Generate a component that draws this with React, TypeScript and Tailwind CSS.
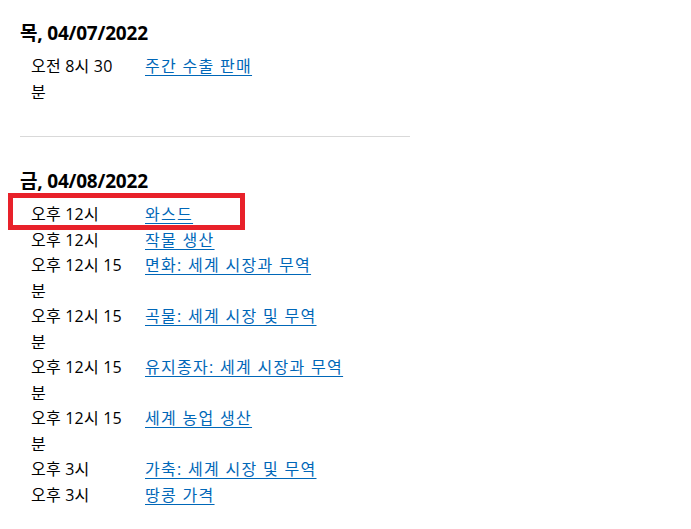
import React from 'react';

interface EventRow {
  time: string;
  title: string;
}

interface DaySection {
  date: string;
  rows: EventRow[];
}

const days: DaySection[] = [
  {
    date: '목, 04/07/2022',
    rows: [{ time: '오전 8시 30 분', title: '주간 수출 판매' }],
  },
  {
    date: '금, 04/08/2022',
    rows: [
      { time: '오후 12시', title: '와스드' },
      { time: '오후 12시', title: '작물 생산' },
      { time: '오후 12시 15 분', title: '면화: 세계 시장과 무역' },
      { time: '오후 12시 15 분', title: '곡물: 세계 시장 및 무역' },
      { time: '오후 12시 15 분', title: '유지종자: 세계 시장과 무역' },
      { time: '오후 12시 15 분', title: '세계 농업 생산' },
      { time: '오후 3시', title: '가축: 세계 시장 및 무역' },
      { time: '오후 3시', title: '땅콩 가격' },
    ],
  },
];

const App: React.FC = () => {
  return (
    <div
      className="relative min-h-screen bg-white text-black pl-[20px] pt-[19px]"
      style={{ fontFamily: '"Open Sans", "Noto Sans CJK KR", sans-serif' }}
    >
      {days.map((day, i) => (
        <section key={day.date} className="w-[390px]">
          {i > 0 && <hr className="border-0 border-t border-[#d9d9d9] mt-[31px] mb-[30px]" />}
          <h2 className="text-[19px] font-bold leading-[28px] tracking-[-0.2px] mb-[7px]">{day.date}</h2>
          <div className="pl-[11px]">
            {day.rows.map((row, j) => (
              <div key={j} className="relative flex text-[16px] leading-[25.5px]">
                <div className="w-[114px] shrink-0 pr-[18px] tracking-[0.2px]">{row.time}</div>
                <a href="#" className="text-[#0067b8] underline underline-offset-[3px] tracking-[1.3px]">
                  {row.title}
                </a>
                {i === 1 && j === 0 && (
                  <div className="absolute left-[-23px] top-[-9px] w-[237px] h-[37px] border-[5px] border-[#e8212a]" />
                )}
              </div>
            ))}
          </div>
        </section>
      ))}
    </div>
  );
};

export default App;
